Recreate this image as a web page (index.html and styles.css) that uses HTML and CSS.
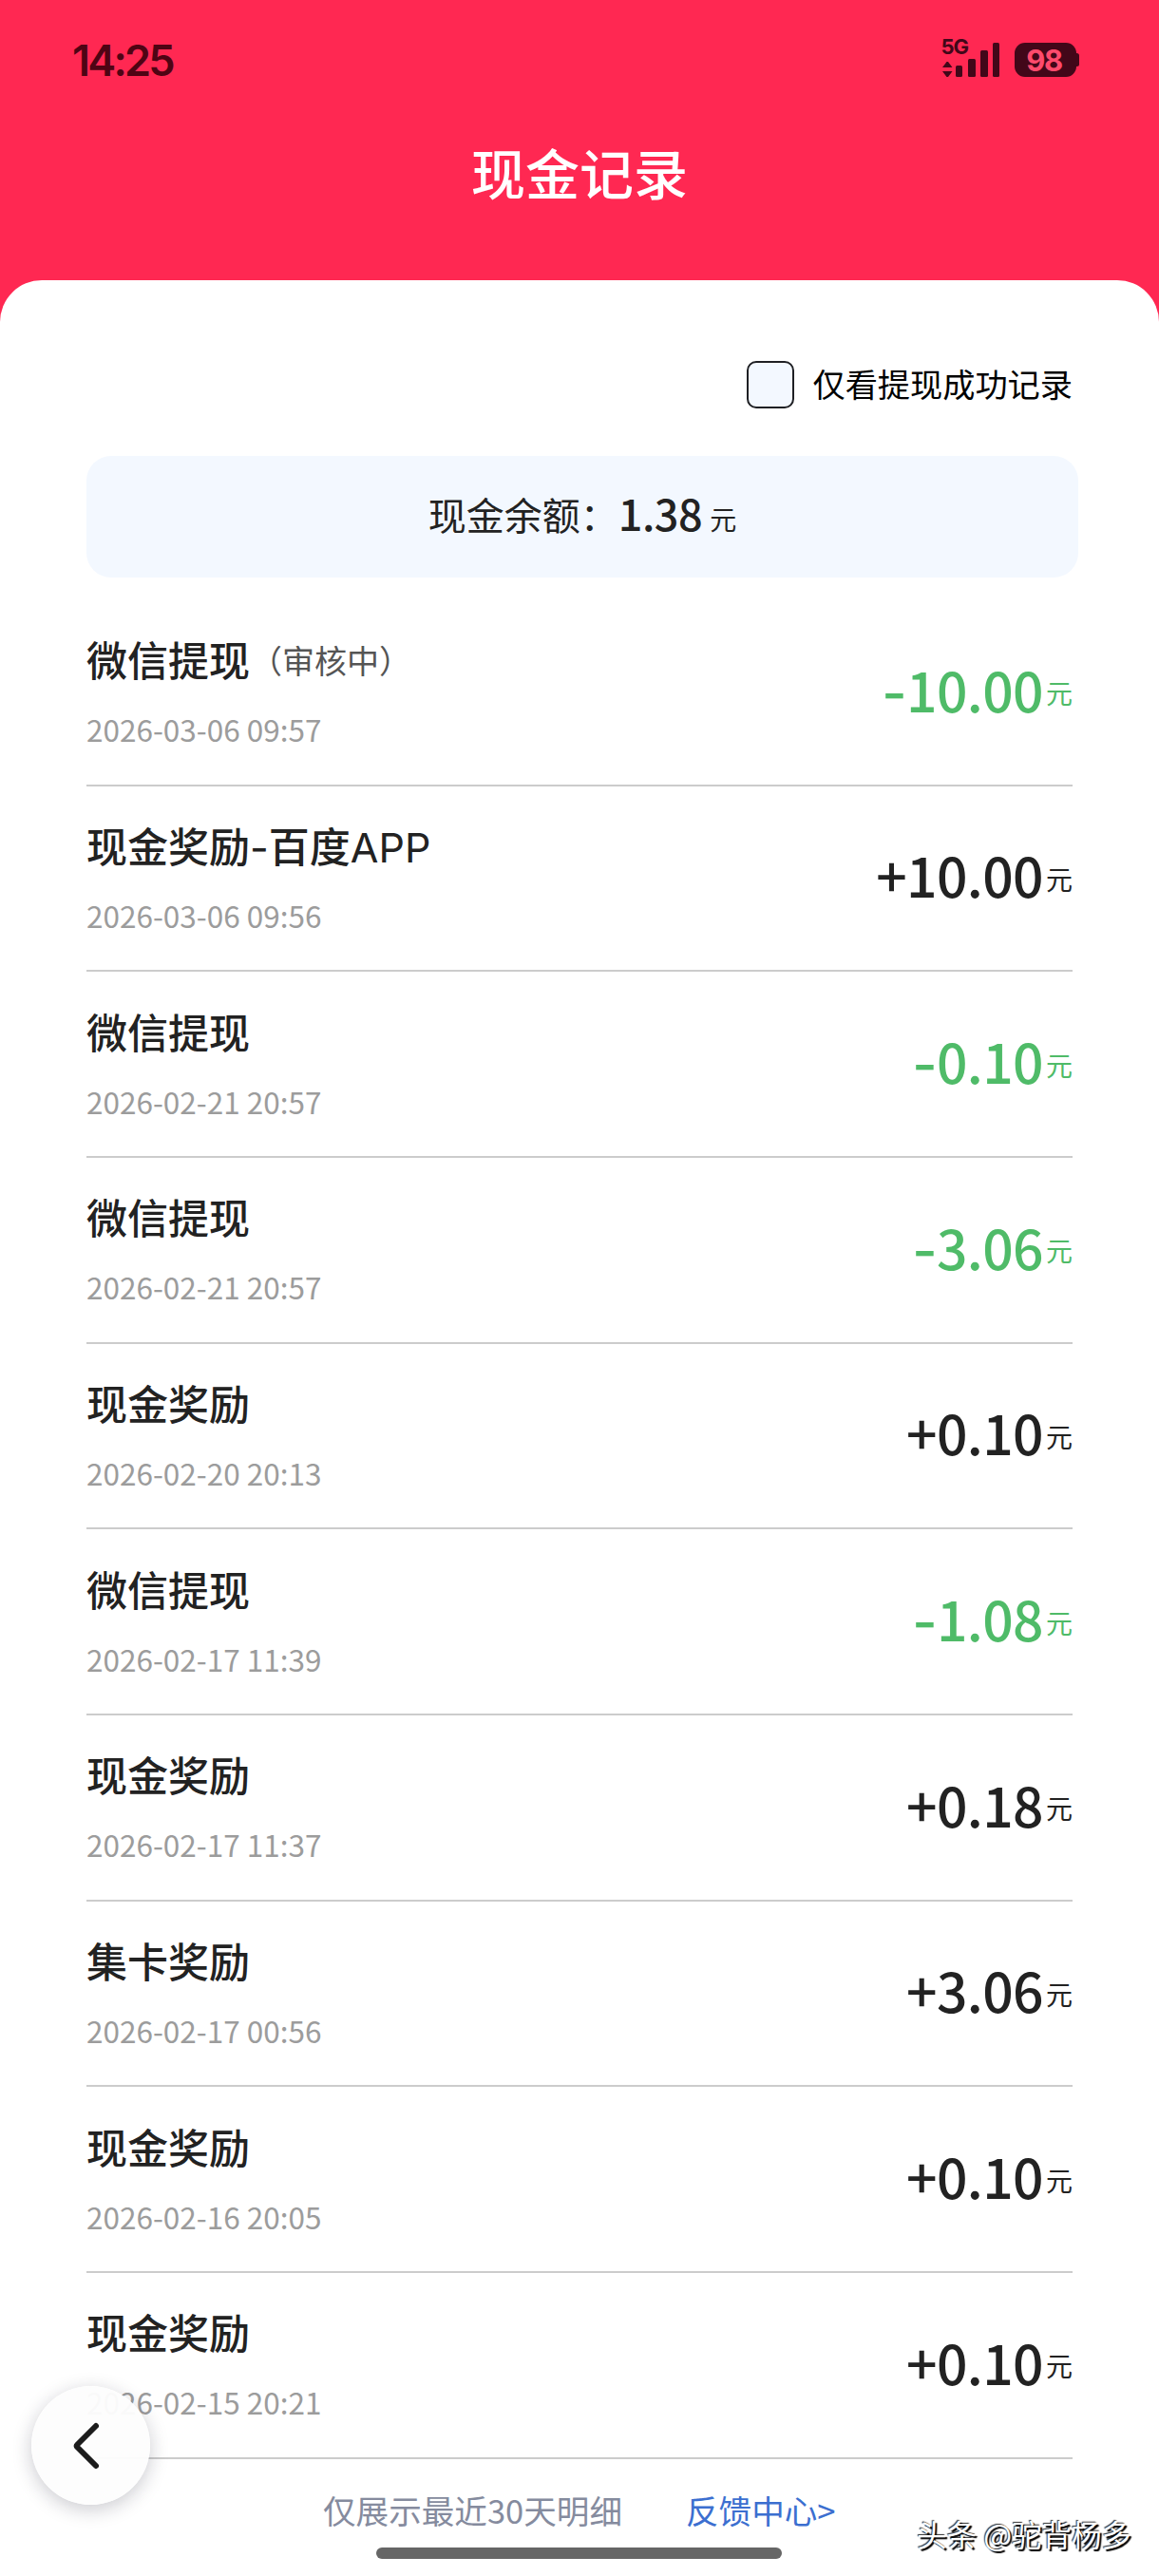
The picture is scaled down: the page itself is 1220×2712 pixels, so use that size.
FILE: index.html
```
<!DOCTYPE html>
<html lang="zh-CN">
<head>
    <meta charset="UTF-8">
    <meta name="viewport" content="width=device-width, initial-scale=1.0">
    <title>现金记录</title>
    <link rel="stylesheet" href="styles.css">
</head>
<body>
    <header class="header">
        <div class="status-bar">
            <span class="time">14:25</span>
            <svg class="status-icons" width="156" height="50" viewBox="-6 -6 156 50">
                <text x="-1.500" y="17" class="net">5G</text>
                <path d="M0 31L4.500 25h1.500l4.500 6zM0 35h10.500l-4.500 6H4.500z"/>
                <rect x="14" y="29" width="7" height="12" rx="1.5"/>
                <rect x="27" y="22" width="8" height="19" rx="1.5"/>
                <rect x="40" y="13" width="8" height="28" rx="1.5"/>
                <rect x="53" y="5" width="7" height="36" rx="1.5"/>
                <rect x="76" y="5" width="65" height="36" rx="11"/>
                <rect x="137" y="16" width="7" height="14" rx="2.5"/>
                <text x="107" y="34.500" class="battery">98</text>
            </svg>
        </div>
        <h1>现金记录</h1>
    </header>

    <main class="card">
        <label class="filter">
            <span class="checkbox"></span>
            <span class="filter-text">仅看提现成功记录</span>
        </label>

        <div class="balance">
            <span class="balance-label">现金余额：</span>
            <span class="balance-num">1.38</span>
            <span class="balance-unit">元</span>
        </div>

        <ul class="list">
            <li class="item">
                <div class="info">
                    <div class="name">微信提现<span class="state">（审核中）</span></div>
                    <div class="date">2026-03-06 09:57</div>
                </div>
                <div class="amount out"><span class="num"><span class="sign">-</span>10.00</span><span class="unit">元</span></div>
            </li>
            <li class="item">
                <div class="info">
                    <div class="name">现金奖励<span class="latin">-</span>百度<span class="latin">APP</span></div>
                    <div class="date">2026-03-06 09:56</div>
                </div>
                <div class="amount"><span class="num">+10.00</span><span class="unit">元</span></div>
            </li>
            <li class="item">
                <div class="info">
                    <div class="name">微信提现</div>
                    <div class="date">2026-02-21 20:57</div>
                </div>
                <div class="amount out"><span class="num"><span class="sign">-</span>0.10</span><span class="unit">元</span></div>
            </li>
            <li class="item">
                <div class="info">
                    <div class="name">微信提现</div>
                    <div class="date">2026-02-21 20:57</div>
                </div>
                <div class="amount out"><span class="num"><span class="sign">-</span>3.06</span><span class="unit">元</span></div>
            </li>
            <li class="item">
                <div class="info">
                    <div class="name">现金奖励</div>
                    <div class="date">2026-02-20 20:13</div>
                </div>
                <div class="amount"><span class="num">+0.10</span><span class="unit">元</span></div>
            </li>
            <li class="item">
                <div class="info">
                    <div class="name">微信提现</div>
                    <div class="date">2026-02-17 11:39</div>
                </div>
                <div class="amount out"><span class="num"><span class="sign">-</span>1.08</span><span class="unit">元</span></div>
            </li>
            <li class="item">
                <div class="info">
                    <div class="name">现金奖励</div>
                    <div class="date">2026-02-17 11:37</div>
                </div>
                <div class="amount"><span class="num">+0.18</span><span class="unit">元</span></div>
            </li>
            <li class="item">
                <div class="info">
                    <div class="name">集卡奖励</div>
                    <div class="date">2026-02-17 00:56</div>
                </div>
                <div class="amount"><span class="num">+3.06</span><span class="unit">元</span></div>
            </li>
            <li class="item">
                <div class="info">
                    <div class="name">现金奖励</div>
                    <div class="date">2026-02-16 20:05</div>
                </div>
                <div class="amount"><span class="num">+0.10</span><span class="unit">元</span></div>
            </li>
            <li class="item">
                <div class="info">
                    <div class="name">现金奖励</div>
                    <div class="date">2026-02-15 20:21</div>
                </div>
                <div class="amount"><span class="num">+0.10</span><span class="unit">元</span></div>
            </li>
        </ul>

        <footer class="footer">
            <span>仅展示最近30天明细</span>
            <a class="feedback">反馈中心&gt;</a>
        </footer>
    </main>

    <button class="back" aria-label="返回">
        <svg width="32" height="54" viewBox="0 0 32 54">
            <path d="M26 6L6.500 25.500Q5 27 6.500 28.500L26 48"/>
        </svg>
    </button>
    <div class="home-bar"></div>
    <div class="watermark">头条 @驼背杨多</div>
</body>
</html>
```

FILE: styles.css
```
* {
    box-sizing: border-box;
}
body {
    position: relative;
    height: 2712px;
    margin: 0;
    font-family: "Noto Sans CJK SC", sans-serif;
    color: #222;
    background-color: #ff2852;
    overflow: hidden;
}
.header {
    height: 295px;
}
.status-bar {
    display: flex;
    justify-content: space-between;
    align-items: flex-start;
    padding: 34px 78px 0 76px;
    height: 100px;
}
.time {
    padding-top: 6px;
    font: 600 45px/48px Inter, sans-serif;
    letter-spacing: -2.8px;
    color: #4f0414;
}
.status-icons {
    fill: #420719;
}
.net {
    font: 700 22px Inter, sans-serif;
    letter-spacing: -1px;
}
.battery {
    font: 700 31px Inter, sans-serif;
    letter-spacing: -1.5px;
    text-anchor: middle;
    fill: #ff4a6c;
}
h1 {
    margin: 0;
    padding-top: 38px;
    font-size: 57px;
    font-weight: 500;
    line-height: 84px;
    text-align: center;
    color: #fff;
}
.card {
    height: 2417px;
    padding: 85px 91px 0;
    border-radius: 44px 44px 0 0;
    background-color: #fff;
}
.filter {
    display: flex;
    justify-content: flex-end;
    align-items: center;
    height: 50px;
    font-size: 34.2px;
    color: #000;
}
.filter-text {
    padding-bottom: 4px;
}
.checkbox {
    width: 50px;
    height: 50px;
    margin-right: 19px;
    border: 2px solid #1f2024;
    border-radius: 10px;
    background-color: #f3f8ff;
}
.balance {
    display: flex;
    justify-content: center;
    align-items: center;
    width: 1044px;
    height: 128px;
    margin-top: 50px;
    border-radius: 26px;
    font-size: 40px;
    line-height: 60px;
    background-color: #f3f8ff;
}
.balance-label {
    padding-bottom: 6px;
}
.balance-num {
    padding-bottom: 8px;
    font-size: 45px;
    font-weight: 500;
    letter-spacing: -0.5px;
}
.balance-unit {
    padding: 4px 0 0 8px;
    font-size: 28px;
}
.list {
    margin: 0;
    padding: 24px 0 0;
    list-style: none;
}
.item {
    display: flex;
    justify-content: space-between;
    align-items: center;
    height: 195.67px;
    border-bottom: 2px solid #ccc;
}
.name {
    height: 64px;
    font-size: 43px;
    font-weight: 500;
    line-height: 64px;
}
.latin {
    font-family: Inter, sans-serif;
    font-weight: 400;
    line-height: 1;
}
.state {
    font-size: 34px;
    font-weight: 400;
    line-height: 1;
    vertical-align: 3px;
    color: #555;
}
.info {
    padding-bottom: 9px;
}
.date {
    margin-top: 22px;
    font-size: 31.5px;
    line-height: 40px;
    color: #9c9c9c;
}
.amount {
    display: flex;
    align-items: center;
}
.num {
    padding-bottom: 8px;
    font-size: 57px;
    font-weight: 500;
    line-height: 80px;
    letter-spacing: -0.6px;
}
.sign {
    font-family: Inter, sans-serif;
    line-height: 1;
}
.out {
    color: #4fbb68;
}
.unit {
    padding: 1px 0 0 3px;
    font-size: 28px;
    line-height: 40px;
}
.footer {
    display: flex;
    padding: 28px 0 0 249px;
    font-size: 34.6px;
    line-height: 50px;
    color: #858b9e;
}
.feedback {
    margin-left: 67px;
    color: #3c6fd0;
}
.back {
    position: absolute;
    top: 2512px;
    left: 33px;
    display: flex;
    justify-content: center;
    align-items: center;
    width: 125px;
    height: 125px;
    padding: 0 9px 0 0;
    border: 0;
    border-radius: 50%;
    background-color: rgba(253, 253, 253, 0.96);
    box-shadow: 0 5px 20px rgba(20, 20, 40, 0.22);
}
.back path {
    fill: none;
    stroke: #1c1c1c;
    stroke-width: 6;
    stroke-linecap: round;
}
.home-bar {
    position: absolute;
    top: 2682px;
    left: 396px;
    width: 427px;
    height: 12px;
    border-radius: 6px;
    background-color: #666;
}
.watermark {
    position: absolute;
    top: 2645px;
    right: 29px;
    font-size: 31.5px;
    line-height: 44px;
    color: #fff;
    text-shadow: 2px 2px 1px #000, -1px -1px 1px #333;
}
```
